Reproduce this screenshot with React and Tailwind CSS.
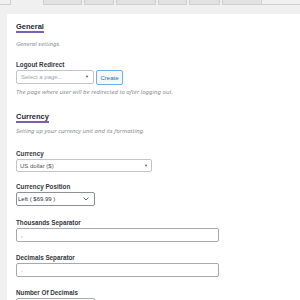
import React from "react";

const sans = { fontFamily: '"Liberation Sans", Arial, sans-serif' };
const noto = { fontFamily: '"Noto Sans", "Open Sans", Arial, sans-serif' };

function Heading({ children, mt = "" }) {
  return (
    <div className={`${mt} flex`}>
      <span className="block text-[7.5px] leading-[9px] font-bold text-[#23282d] border-b-2 border-[#7b5fb3]">
        {children}
      </span>
    </div>
  );
}

function Label({ children, mt = "" }) {
  return (
    <div className={`${mt} h-[9px] text-[6.3px] leading-[9px] font-bold text-[#32373c]`}>
      {children}
    </div>
  );
}

function Desc({ children, mt = "" }) {
  return (
    <div className={`${mt} h-[8px] text-[6px] leading-[8px] italic text-[#8c8f94]`} style={noto}>
      {children}
    </div>
  );
}

export default function App() {
  return (
    <div className="w-[300px] h-[300px] overflow-hidden bg-[#f0f0f0]" style={sans}>
      {/* tab bar */}
      <div className="flex h-[5px]">
        <div className="w-[11px] h-[5px] border-r border-b border-[#d0d0d0] bg-[#f0f0f0]" />
        <div className="w-[32px] h-[5px]" />
        <div className="flex h-[5px] gap-[2px]">
          <div className="w-[39px] h-[5px] bg-[#e2e2e2] border-x border-b border-[#d0d0d0]" />
          <div className="w-[30px] h-[5px] bg-[#e2e2e2] border-x border-b border-[#d0d0d0]" />
          <div className="w-[40px] h-[5px] bg-[#e2e2e2] border-x border-b border-[#d0d0d0]" />
          <div className="w-[29px] h-[5px] bg-[#e2e2e2] border-x border-b border-[#d0d0d0]" />
          <div className="w-[31px] h-[5px] bg-[#e2e2e2] border-x border-b border-[#d0d0d0]" />
          <div className="w-[40px] h-[5px] bg-[#e2e2e2] border-x border-b border-[#d0d0d0]" />
        </div>
        <div className="flex-1 h-[5px] border-b border-[#d0d0d0]" />
      </div>

      {/* panel */}
      <div className="mt-[9px] ml-[7px] bg-white pl-[9px] pt-[8px] h-[300px]">
        <Heading>General</Heading>
        <Desc mt="mt-[7px]">General settings.</Desc>

        <Label mt="mt-[12px]">Logout Redirect</Label>
        <div className="mt-[1px] flex gap-[2px]">
          <div className="w-[78px] h-[14px] border border-[#c3c4c7] rounded-[2px] flex items-center justify-between pl-[4px] pr-[4px]">
            <span className="text-[6px] leading-[8px] text-[#a0a5aa]">Select a page...</span>
            <span className="text-[4px] leading-[8px] text-[#555]">▼</span>
          </div>
          <div className="w-[27px] h-[15px] border border-[#72aee6] rounded-[2px] bg-[#f6f7f7] flex items-center justify-center">
            <span className="text-[6px] leading-[8px] text-[#2271b1]">Create</span>
          </div>
        </div>
        <Desc mt="mt-[3px]">The page where user will be redirected to after logging out.</Desc>

        <Heading mt="mt-[16px]">Currency</Heading>
        <Desc mt="mt-[4px]">Setting up your currency unit and its formatting.</Desc>

        <Label mt="mt-[14px]">Currency</Label>
        <div className="mt-[1px] w-[136px] h-[13px] border border-[#c3c4c7] rounded-[2px] flex items-center justify-between pl-[3px] pr-[3px]">
          <span className="text-[6px] leading-[8px] text-[#50575e]">US dollar ($)</span>
          <span className="text-[4px] leading-[8px] text-[#555]">▼</span>
        </div>

        <Label mt="mt-[10px]">Currency Position</Label>
        <div className="mt-[1px] w-[79px] h-[14px] border border-[#8c8f94] rounded-[2px] flex items-center justify-between pl-[1px] pr-[5px]">
          <span className="text-[6px] leading-[8px] text-[#2c3338]">Left ( $69.99 )</span>
          <svg width="6" height="4" viewBox="0 0 6 4">
            <path d="M0.5 0.5 L3 3 L5.5 0.5" fill="none" stroke="#50575e" strokeWidth="0.9" />
          </svg>
        </div>

        <Label mt="mt-[12px]">Thousands Separator</Label>
        <div className="mt-[1px] w-[203px] h-[14px] border border-[#a7aaad] rounded-[2px] flex items-center pl-[4px]">
          <span className="text-[6px] leading-[8px] text-[#50575e]">,</span>
        </div>

        <Label mt="mt-[11px]">Decimals Separator</Label>
        <div className="mt-[1px] w-[203px] h-[14px] border border-[#a7aaad] rounded-[2px] flex items-center pl-[4px]">
          <span className="text-[6px] leading-[8px] text-[#50575e]">.</span>
        </div>

        <Label mt="mt-[11px]">Number Of Decimals</Label>
        <div className="mt-[1px] w-[79px] h-[14px] border border-[#a7aaad] rounded-[2px]" />
      </div>
    </div>
  );
}
